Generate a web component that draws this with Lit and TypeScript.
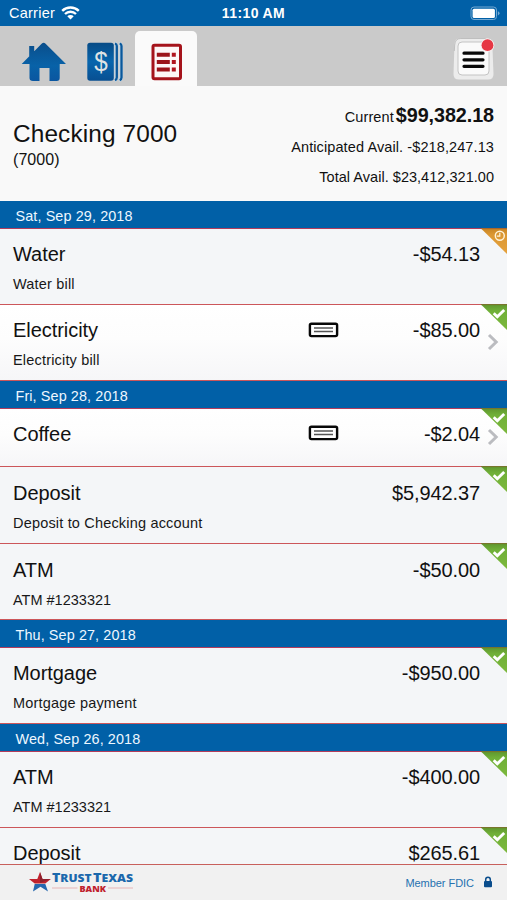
import { LitElement, html, css, svg, nothing } from "lit";
import { customElement, property } from "lit/decorators.js";
import { classMap } from "lit/directives/class-map.js";

interface Entry {
  name: string;
  note?: string;
  amount: string;
  pending?: boolean;
  check?: boolean;
  size?: string;
}

const days: { date: string; entries: Entry[] }[] = [
  {
    date: "Sat, Sep 29, 2018",
    entries: [
      { name: "Water", note: "Water bill", amount: "-$54.13", pending: true },
      { name: "Electricity", note: "Electricity bill", amount: "-$85.00", check: true },
    ],
  },
  {
    date: "Fri, Sep 28, 2018",
    entries: [
      { name: "Coffee", amount: "-$2.04", check: true, size: "short" },
      { name: "Deposit", note: "Deposit to Checking account", amount: "$5,942.37", size: "tall" },
      { name: "ATM", note: "ATM #1233321", amount: "-$50.00", size: "low" },
    ],
  },
  {
    date: "Thu, Sep 27, 2018",
    entries: [{ name: "Mortgage", note: "Mortgage payment", amount: "-$950.00" }],
  },
  {
    date: "Wed, Sep 26, 2018",
    entries: [
      { name: "ATM", note: "ATM #1233321", amount: "-$400.00" },
      { name: "Deposit", amount: "$265.61" },
    ],
  },
];

@customElement("entry-row")
class EntryRow extends LitElement {
  @property({ attribute: false }) entry!: Entry;

  static styles = css`
    :host { display: block; }
    .row {
      position: relative; box-sizing: border-box; height: 76px; display: flex;
      padding: 11px 27px 0 13px; background: #f4f6f8; border-bottom: 1px solid #cc565a;
    }
    .short { height: 58px; }
    .tall { height: 77px; padding-top: 12px; }
    .low { padding-top: 12px; }
    .link { background: linear-gradient(#fff, #fdfdfd 45%, #f6f6f8); }
    .text { flex: 1; }
    .name { font-size: 20px; line-height: 28px; letter-spacing: -0.05px; color: #111; }
    .note { font-size: 14.5px; line-height: 20px; margin-top: 6px; letter-spacing: 0.18px; color: #181818; }
    .numeric { letter-spacing: 0; }
    .amount { font-size: 20px; line-height: 28px; letter-spacing: -0.1px; color: #111; }
    .check { position: absolute; left: 308px; top: 17px; }
    .corner { position: absolute; right: 0; top: -1px; }
    .chevron { position: absolute; right: 8px; top: 28px; }
    .short .chevron { top: 19px; }
    .short .check { top: 16px; }
  `;

  render() {
    const e = this.entry;
    return html`<div class=${classMap({ row: true, link: !!e.check, short: e.size === "short", tall: e.size === "tall", low: e.size === "low" })}>
      <div class="text">
        <div class="name">${e.name}</div>
        ${e.note ? html`<div class=${classMap({ note: true, numeric: e.note.includes("#") })}>${e.note}</div>` : nothing}
      </div>
      <div class="amount">${e.amount}</div>
      ${e.check
        ? html`<svg class="check" width="31" height="16" viewBox="0 0 31 16">
              <rect x="1.9" y="1.7" width="27.2" height="12.4" rx="1.6" fill="#fff" stroke="#080808" stroke-width="2.4"/>
              <path d="M6 6h19M6 9.600h19" stroke="#555" stroke-width="1.500"/>
            </svg>
            <svg class="chevron" width="12" height="18" viewBox="0 0 12 18">
              <path d="M2 2l7.2 7L2 16" fill="none" stroke="#bbbcc0" stroke-width="3"/>
            </svg>`
        : nothing}
      <svg class="corner" width="26" height="27" viewBox="0 0 26 27">
        <defs>
          <linearGradient id="g" x1="0" y1="0" x2="0" y2="1">
            <stop offset="0" stop-color=${e.pending ? "#c88524" : "#5f962e"}/>
            <stop offset=".25" stop-color=${e.pending ? "#dc9834" : "#70b038"}/>
            <stop offset="1" stop-color=${e.pending ? "#e5a23d" : "#7cb83d"}/>
          </linearGradient>
        </defs>
        <path d="M0 0.5h26v25.5z" fill="url(#g)"/>
        <path d="M0 .6h26" stroke=${e.pending ? "#a8672c" : "#76752c"}/>
        ${e.pending
          ? svg`<circle cx="18.8" cy="7.8" r="4.5" fill="none" stroke="#fff3da" stroke-width="1.4"/><path d="M18.8 4.8v3.3h-3" fill="none" stroke="#fff3da" stroke-width="1.2"/>`
          : svg`<path d="M12.700 9.300l3.600 3.400L23.200 6" fill="none" stroke="#fff" stroke-width="2.900"/>`}
      </svg>
    </div>`;
  }
}

@customElement("app-root")
class AppRoot extends LitElement {
  static styles = css`
    :host {
      display: flex; flex-direction: column; width: 507px; height: 900px; overflow: hidden;
      background: #f9f9f9; font-family: "Liberation Sans", Arial, sans-serif; color: #111;
    }
    .status {
      height: 26px; flex: none; background: #0160a7; color: #fff; display: grid;
      grid-template-columns: 1fr auto 1fr; align-items: center; line-height: 26px;
    }
    .carrier { display: flex; align-items: center; padding-left: 9px; gap: 6px; font-size: 14.5px; letter-spacing: 0.25px; }
    .time { font-weight: bold; font-size: 14px; letter-spacing: 0.4px; }
    .battery { justify-self: end; margin-right: 7px; }
    .status svg, .tabs svg { display: block; }
    .tabs { height: 60px; flex: none; background: #cacaca; display: flex; padding-left: 21px; }
    .home { margin-top: 16px; }
    .money { margin: 16px 0 0 20px; }
    .active {
      margin: 5px 0 0 12px; width: 62px; height: 55px; background: #fafafa; border-radius: 5px 5px 0 0;
      display: flex; justify-content: center; padding-top: 12px; box-sizing: border-box;
    }
    .menu { margin: 11px 12px 0 auto; }
    .account { height: 115px; flex: none; display: flex; justify-content: space-between; padding: 0 13px; background: #f9f9f9; }
    .title { font-size: 24.4px; line-height: 30px; margin-top: 33px; letter-spacing: 0.12px; }
    .number { font-size: 16px; line-height: 21px; letter-spacing: 0.05px; }
    .balances { text-align: right; font-size: 14.5px; margin-top: 14px; letter-spacing: 0.1px; }
    .balance { height: 32px; line-height: 30px; white-space: nowrap; }
    .balance + .balance { height: 29px; line-height: 31px; }
    .balance + .balance + .balance { letter-spacing: 0.03px; line-height: 32px; }
    .current { font-size: 19.8px; font-weight: bold; letter-spacing: -0.08px; margin-left: 2px; }
    .list { flex: 1; min-height: 0; overflow: hidden; }
    .date {
      box-sizing: border-box; height: 28px; padding-left: 15.5px; background: #0160a7; border-bottom: 1px solid #b23c5c;
      color: #eef7ff; font-size: 14.4px; line-height: 30px; letter-spacing: 0.11px;
    }
    .footer {
      height: 36px; box-sizing: border-box; flex: none; border-top: 1px solid #c8605c; background: #f1f1f1;
      display: flex; justify-content: space-between; padding: 0 14px 0 28px;
    }
    .logo { margin-top: 3px; overflow: visible; }
    .fdic { display: flex; align-items: center; gap: 9px; color: #2672b0; font-size: 11px; letter-spacing: -0.04px; }
    .fdic svg { margin-top: -1px; }
  `;

  render() {
    return html`
      <div class="status">
        <div class="carrier">Carrier
          <svg width="19" height="14" viewBox="0 0 19 14">
            <path d="M1.2 4.8a12 12 0 0 1 16.6 0M4 8a8 8 0 0 1 11 0" fill="none" stroke="#fff" stroke-width="2.4"/>
            <path d="M6.3 10.2a4.6 4.6 0 0 1 6.4 0L9.5 13.6z" fill="#fff"/>
          </svg>
        </div>
        <div class="time">11:10 AM</div>
        <svg class="battery" width="30" height="15" viewBox="0 0 30 15">
          <rect x="1" y="1" width="25.5" height="12.5" rx="3" fill="none" stroke="#75a9d2"/>
          <rect x="2.6" y="2.7" width="22.3" height="9.2" rx="1.5" fill="#fff"/>
          <path d="M27.900 5.200q1.600.6 1.600 2.100t-1.600 2.100z" fill="#75a9d2"/>
        </svg>
      </div>
      <div class="tabs">
        <svg class="home" width="46" height="41" viewBox="0 0 46 41">
          <defs><linearGradient id="b" x1="0" y1="0" x2="0" y2="1"><stop offset="0" stop-color="#0a4e8b"/><stop offset=".6" stop-color="#0862a8"/><stop offset="1" stop-color="#0a56a0"/></linearGradient></defs>
          <path d="M.7 22L20.600 1.800q2-2 4 0L45 22h-6.300v14q0 3-3 3h-7.200V26h-10v13h-6.500q-3.500 0-3.500-3V22zM8.200 4h5v6l-5 5z" fill="url(#b)"/>
        </svg>
        <svg class="money" width="36" height="41" viewBox="0 0 36 41">
          <defs><linearGradient id="b2" x1="0" y1="0" x2="0" y2="1"><stop offset="0" stop-color="#074b86"/><stop offset=".5" stop-color="#0765ad"/><stop offset="1" stop-color="#084f91"/></linearGradient></defs>
          <rect x=".3" y=".8" width="26.500" height="38" rx="2.800" fill="url(#b2)"/>
          <path d="M27.500 1.500q1.800.5 1.800 2.500v31.500q0 2-1.800 2.700M32 1.500q2 .5 2 2.500v31.500q0 2-2 2.700" fill="none" stroke="#c3d7e6" stroke-width="3.600"/>
          <path d="M28 1.500q1.800.5 1.800 2.500v31.500q0 2-1.800 2.700M32.700 1.500q1.800.5 1.800 2.500v31.500q0 2-1.800 2.700" fill="none" stroke="#0a589b" stroke-width="2.300"/>
          <text x="7.200" y="29" font-size="27" fill="#dfe3e4" font-family="Liberation Sans" textLength="13.500" lengthAdjust="spacingAndGlyphs">$</text>
        </svg>
        <div class="active">
          <svg width="31" height="38" viewBox="0 0 31 38">
            <rect x="2" y="2.200" width="27.500" height="33.600" rx="1.500" fill="#fdf6f6" stroke="#a5131b" stroke-width="3"/>
            <path d="M5.800 11.700h13M5.800 19.100h13M5.800 26.600h13" stroke="#9c1319" stroke-width="4"/>
            <path d="M20.800 11.700h4M20.800 19.100h4M20.800 26.600h4" stroke="#b0131d" stroke-width="4"/>
          </svg>
        </div>
        <svg class="menu" width="43" height="44" viewBox="0 0 43 44">
          <path d="M8 1.500h27q5 0 5.300 5l1.200 30.500q.2 5.500-5.500 5.500H7q-5.700 0-5.500-5.500l1-30.500q.5-5 5.500-5z" fill="#ececec"/>
          <path d="M2.300 14l.4-6q.5-6.500 6-6.500h25" fill="none" stroke="#b8b8b8" stroke-width=".8"/>
          <rect x="6" y="5" width="31" height="33" rx="4" fill="#fafafa" stroke="#c4c4c4"/>
          <path d="M12 16.200h19M12 22.800h19M12 29.300h19" stroke="#080808" stroke-width="3.200" stroke-linecap="round"/>
          <circle cx="35.500" cy="8.200" r="6.800" fill="#f6eeee"/><circle cx="35.500" cy="8.200" r="5.900" fill="#e63744"/>
        </svg>
      </div>
      <div class="account">
        <div>
          <div class="title">Checking 7000</div>
          <div class="number">(7000)</div>
        </div>
        <div class="balances">
          <div class="balance">Current<span class="current">$99,382.18</span></div>
          <div class="balance">Anticipated Avail. -$218,247.13</div>
          <div class="balance">Total Avail. $23,412,321.00</div>
        </div>
      </div>
      <div class="list">
        ${days.map((d) => html`<div class="date">${d.date}</div>${d.entries.map((e) => html`<entry-row .entry=${e}></entry-row>`)}`)}
      </div>
      <div class="footer">
        <svg class="logo" width="108" height="30" viewBox="0 0 108 30">
          <path d="M12 4l2.500 7h8.300l-5.500 4.500H6.700L1 11h8.300z" fill="#c0222d"/>
          <path d="M12 4l2.500 7h8.300L12 15z" fill="#8f202c"/>
          <path d="M6.700 16h10.600L20 23.500l-7.500-4.700L5 23.500z" fill="#2567ae"/>
          <g font-family="Open Sans" font-weight="800" fill="#1b68ac">
            <text x="24" y="14.200" font-size="13" textLength="39.500" lengthAdjust="spacingAndGlyphs">T<tspan font-size="11">RUST</tspan></text>
            <text x="65" y="14.200" font-size="13" textLength="40" lengthAdjust="spacingAndGlyphs">T<tspan font-size="11">EXAS</tspan></text>
          </g>
          <text x="51.500" y="23.500" font-size="9.500" font-family="Open Sans" font-weight="800" fill="#c0222d" textLength="26.500" lengthAdjust="spacingAndGlyphs">BANK</text>
          <path d="M24 20h25.500M80 20h25" stroke="#e6b5b7" stroke-width="1"/>
        </svg>
        <div class="fdic">Member FDIC
          <svg width="10" height="12" viewBox="0 0 10 12"><rect x="1" y="5" width="8" height="6.300" rx="1" fill="#0a4d8c"/><path d="M2.700 5.500V3.600a2.300 2.300 0 0 1 4.600 0v1.900" fill="none" stroke="#0a4d8c" stroke-width="1.500"/></svg>
        </div>
      </div>
    `;
  }
}
